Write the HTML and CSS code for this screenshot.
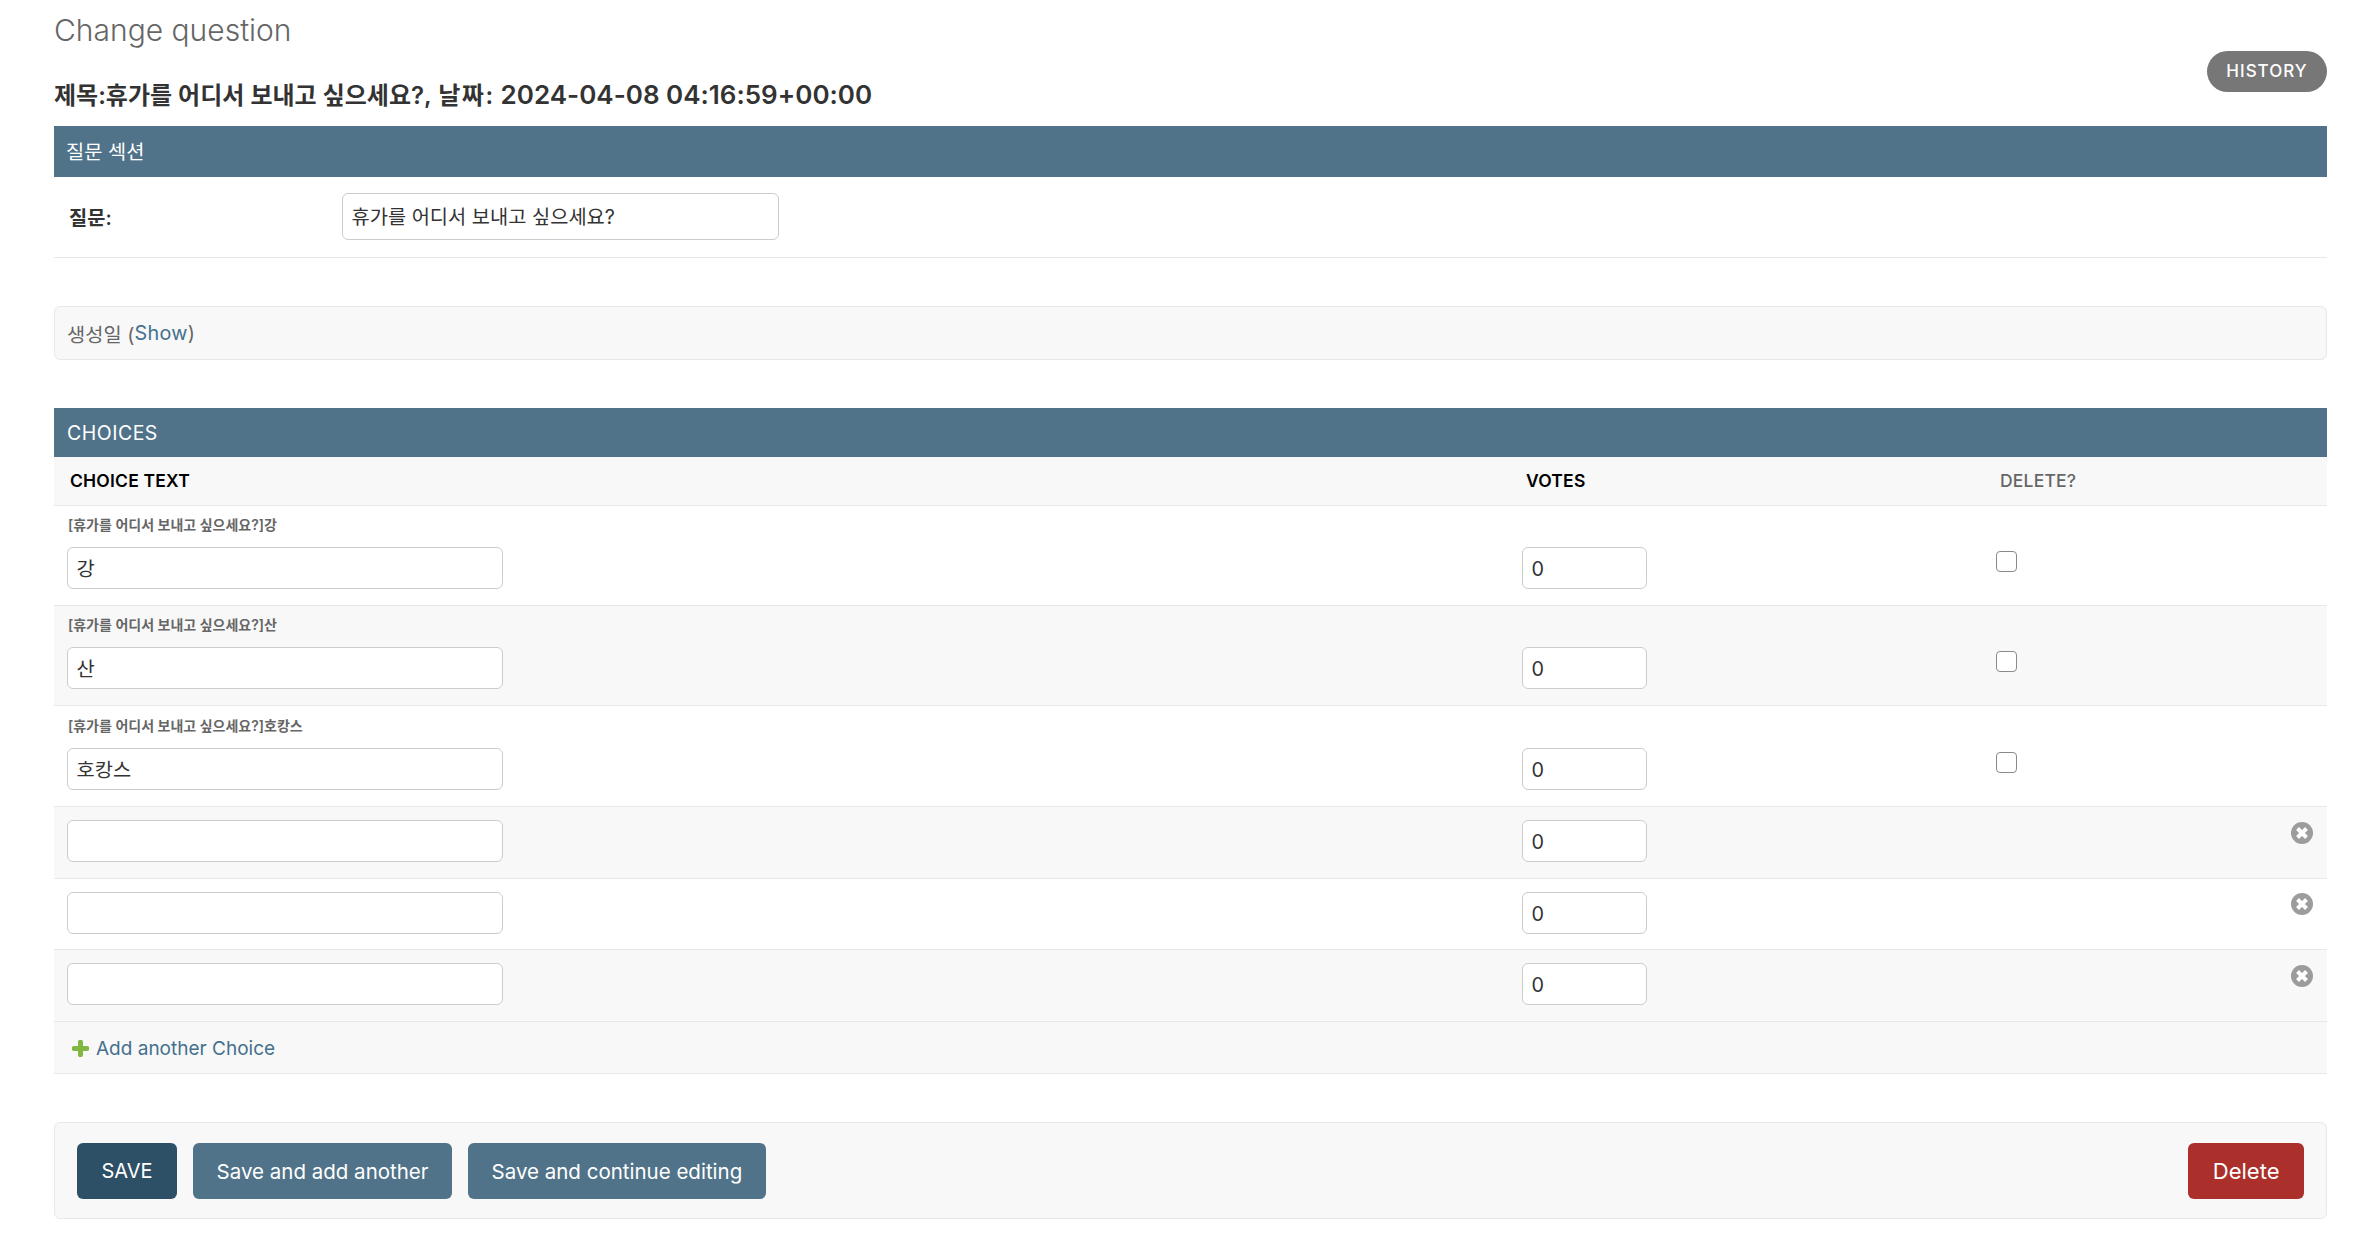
FILE: index.html
```html
<!DOCTYPE html>
<html lang="ko">
<head>
<meta charset="utf-8">
<title>Change question</title>
<link rel="stylesheet" href="styles.css">
</head>
<body>
<main class="content">
  <header class="page-head">
    <div class="titles">
      <h1>Change question</h1>
      <h2>제목:휴가를 어디서 보내고 싶으세요?, <span class="date-label">날짜:</span> <span class="stamp">2024-04-08 04:16:59+00:00</span></h2>
    </div>
    <a class="history" href="#">HISTORY</a>
  </header>

  <section class="module">
    <h3 class="bar bar-tall">질문 섹션</h3>
    <div class="form-row">
      <label class="field-label">질문:</label>
      <input class="input input-question" type="text" value="휴가를 어디서 보내고 싶으세요?">
    </div>
  </section>

  <section class="collapsed">생성일 (<a href="#">Show</a>)</section>

  <section class="module">
    <h3 class="bar bar-choices">CHOICES</h3>
    <table class="choices">
      <colgroup>
        <col class="col-text"><col class="col-votes"><col class="col-delete"><col class="col-x">
      </colgroup>
      <thead>
        <tr>
          <th>CHOICE TEXT</th>
          <th>VOTES</th>
          <th class="muted">DELETE?</th>
          <th></th>
        </tr>
      </thead>
      <tbody>
        <tr class="saved">
          <td><p class="original">[휴가를 어디서 보내고 싶으세요?]강</p><input class="input input-choice" type="text" value="강"></td>
          <td class="cell-votes"><input class="input input-votes" type="text" value="0"></td>
          <td class="cell-check"><input class="check" type="checkbox"></td>
          <td></td>
        </tr>
        <tr class="saved alt">
          <td><p class="original">[휴가를 어디서 보내고 싶으세요?]산</p><input class="input input-choice" type="text" value="산"></td>
          <td class="cell-votes"><input class="input input-votes" type="text" value="0"></td>
          <td class="cell-check"><input class="check" type="checkbox"></td>
          <td></td>
        </tr>
        <tr class="saved third">
          <td><p class="original">[휴가를 어디서 보내고 싶으세요?]호캉스</p><input class="input input-choice" type="text" value="호캉스"></td>
          <td class="cell-votes"><input class="input input-votes" type="text" value="0"></td>
          <td class="cell-check"><input class="check" type="checkbox"></td>
          <td></td>
        </tr>
        <tr class="extra alt">
          <td><input class="input input-choice" type="text"></td>
          <td><input class="input input-votes" type="text" value="0"></td>
          <td></td>
          <td class="cell-x"><svg class="x-icon" viewBox="0 0 22 22"><circle cx="11" cy="11" r="11" fill="#9c9c9c"/><path d="M6.500 6.500l9 9M15.500 6.500l-9 9" stroke="#fff" stroke-width="4"/></svg></td>
        </tr>
        <tr class="extra short">
          <td><input class="input input-choice" type="text"></td>
          <td><input class="input input-votes" type="text" value="0"></td>
          <td></td>
          <td class="cell-x"><svg class="x-icon" viewBox="0 0 22 22"><circle cx="11" cy="11" r="11" fill="#9c9c9c"/><path d="M6.500 6.500l9 9M15.500 6.500l-9 9" stroke="#fff" stroke-width="4"/></svg></td>
        </tr>
        <tr class="extra alt last">
          <td><input class="input input-choice" type="text"></td>
          <td><input class="input input-votes" type="text" value="0"></td>
          <td></td>
          <td class="cell-x"><svg class="x-icon" viewBox="0 0 22 22"><circle cx="11" cy="11" r="11" fill="#9c9c9c"/><path d="M6.500 6.500l9 9M15.500 6.500l-9 9" stroke="#fff" stroke-width="4"/></svg></td>
        </tr>
      </tbody>
    </table>
    <div class="add-row">
      <svg class="plus-icon" viewBox="0 0 17 17"><path d="M8.500 2.200v12.600M2.200 8.500h12.600" stroke="#80b842" stroke-width="5" stroke-linecap="round"/></svg>
      <a href="#">Add another Choice</a>
    </div>
  </section>

  <footer class="submit-row">
    <a class="btn btn-default" href="#">SAVE</a>
    <a class="btn" href="#">Save and add another</a>
    <a class="btn" href="#">Save and continue editing</a>
    <a class="btn btn-delete" href="#">Delete</a>
  </footer>
</main>
</body>
</html>
```

FILE: styles.css
```css
* { box-sizing: border-box; }
html, body { margin: 0; padding: 0; background: #fff; }
body {
  font-family: Inter, "Noto Sans CJK KR", sans-serif;
  font-size: 19.8px;
  color: #333;
}
a { text-decoration: none; color: #44708c; }
.content { padding: 0 49px 0 54px; }

.page-head { display: flex; justify-content: space-between; align-items: flex-start; height: 126px; }
h1 {
  margin: 0; padding-top: 12px; height: 72px;
  font-size: 30px; line-height: 36px; font-weight: 300; color: #666;
}
h2 {
  margin: 0; font-size: 24px; line-height: 30px; font-weight: 600; color: #333; padding-top: 8px;
}
.date-label { letter-spacing: 1.5px; margin-left: 1px; }
.stamp { font-size: 26px; }
.history {
  margin-top: 51px; width: 120px; height: 41px; border-radius: 21px; padding-bottom: 2px;
  background: #777; color: #fff;
  font-size: 17px; letter-spacing: 1px; font-weight: 500;
  display: flex; align-items: center; justify-content: center;
}

.bar {
  margin: 0; background: #507389; color: #fff; font-weight: 400;
  display: flex; align-items: center; padding-left: 13px;
}
.bar-tall { height: 51px; font-size: 19.8px; padding-left: 12px; padding-bottom: 3px; }
.bar-choices { height: 49px; font-size: 19.5px; letter-spacing: 0.5px; }

.form-row {
  display: flex; align-items: center; height: 81px;
  padding-left: 15px; padding-bottom: 1px; border-bottom: 1px solid #e8e8e8;
}
.field-label { width: 273px; font-weight: 600; font-size: 19.8px; }

.input {
  display: block; height: 42px; padding: 0 8.5px; background: #fff;
  border: 1.5px solid #ccc; border-radius: 6px;
  font-family: inherit; font-size: 19.8px; color: #333; outline: none;
}
.input-question { width: 437px; height: 47px; padding-bottom: 2px; }
.input-choice { width: 436px; margin-left: 1px; padding-bottom: 1px; }
.input-votes { width: 125px; padding-top: 2px; }

.collapsed {
  margin-top: 48px; height: 54px; padding-left: 12px;
  display: flex; align-items: center; white-space: pre;
  background: #f8f8f8; border: 1.5px solid #e8e8e8; border-radius: 6px; color: #666;
}
.collapsed a { letter-spacing: 0.3px; }
.collapsed + .module { margin-top: 48px; }

.choices { width: 100%; border-collapse: collapse; table-layout: fixed; }
.col-text { width: 1456px; }
.col-votes { width: 474px; }
.col-delete { width: 280px; }
.choices th {
  height: 48px; padding: 0 0 0 16px; text-align: left; background: #f8f8f8;
  font-size: 17.5px; font-weight: 600; color: #000; letter-spacing: 0.2px;
  border-bottom: 1px solid #e8e8e8;
}
.choices th.muted { color: #666; font-weight: 500; }
.choices td { padding: 13px 0 0 12px; vertical-align: top; border-bottom: 1px solid #e8e8e8; }
.choices .alt td { background: #f8f8f8; }
.saved td { height: 100px; padding-top: 10px; }
.saved.third td { height: 101px; padding-top: 11px; }
.extra td { height: 72px; }
.extra.short td { height: 71px; padding-top: 13px; }
.original {
  margin: 0 0 14px; padding-left: 2px; font-size: 14px; line-height: 17px; font-weight: 600; color: #666;
}
.saved .cell-votes { padding-top: 41px; }
.saved .cell-check { padding-top: 45px; }
.saved.third .cell-votes { padding-top: 42px; }
.saved.third .cell-check { padding-top: 46px; }
.check {
  appearance: none; display: block; margin: 0; width: 21px; height: 21px;
  background: #fff; border: 1.5px solid #8a8a8a; border-radius: 4px;
}
.extra .cell-x { padding: 15px 14px 0 0; text-align: right; }
.extra.short .cell-x { padding-top: 14px; }
.extra.last .cell-x { padding-top: 15px; }
.x-icon { display: inline-block; width: 22px; height: 22px; vertical-align: top; }

.add-row {
  display: flex; align-items: center; gap: 7px; height: 52px; padding-left: 18px; padding-top: 2px;
  background: #f8f8f8; border-bottom: 1px solid #e8e8e8; font-size: 19px;
}
.plus-icon { width: 17px; height: 17px; }

.submit-row {
  display: flex; gap: 16px; height: 97px; margin-top: 48px; padding: 20px 22px 0;
  background: #f8f8f8; border: 1.5px solid #e8e8e8; border-radius: 6px;
}
.btn {
  display: flex; align-items: center; height: 56px; padding: 1px 23.5px 0; border-radius: 6px;
  background: #507389; color: #fff; font-size: 20.5px;
}
.btn-default { background: #2d5066; font-size: 20px; padding: 1px 24.5px 0; }
.btn-delete { background: #ab2f2a; margin-left: auto; font-size: 22px; padding: 0 24.5px; }
```
